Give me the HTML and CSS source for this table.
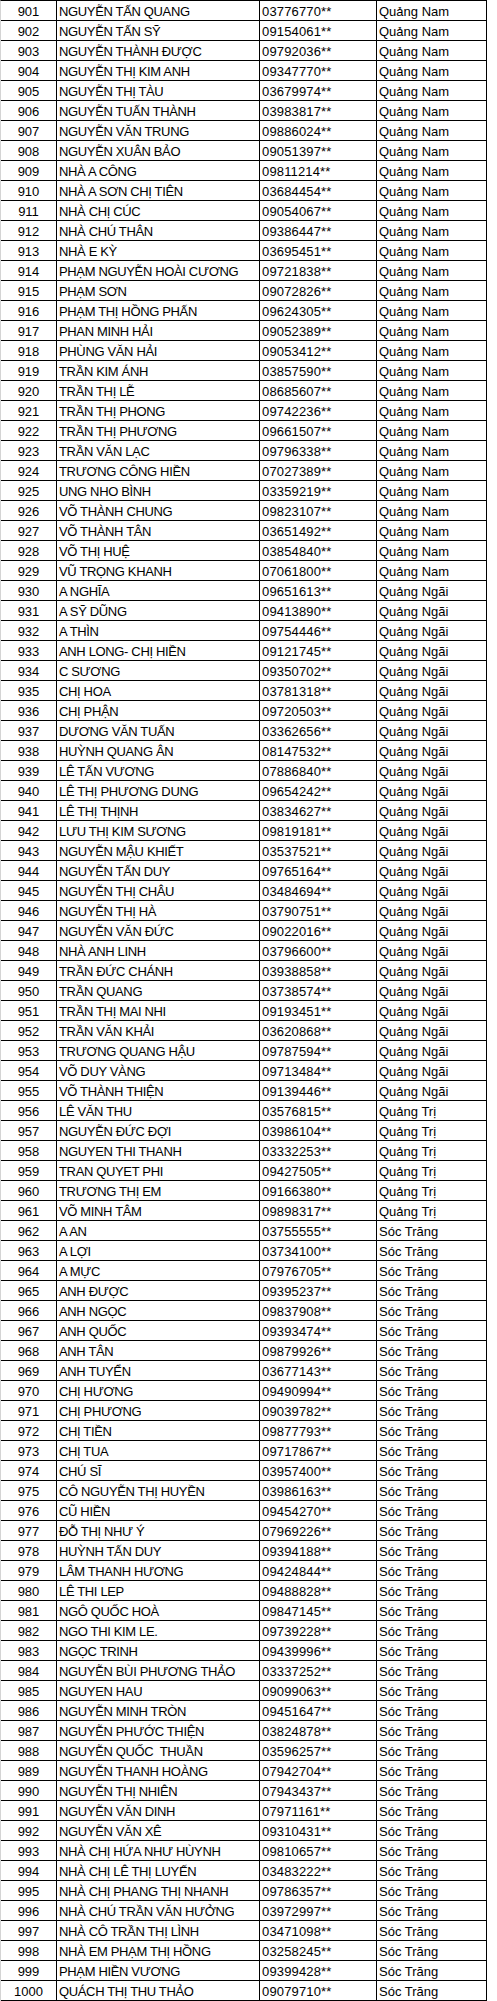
FILE: index.html
```html
<!DOCTYPE html>
<html lang="vi">
<head>
<meta charset="utf-8">
<title>Danh sách</title>
<link rel="stylesheet" href="styles.css">
</head>
<body>
<div class="sheet">
<div class="row"><div class="c num">901</div><div class="c name">NGUYỄN TẤN QUANG</div><div class="c phone">03776770**</div><div class="c prov">Quảng Nam</div></div>
<div class="row"><div class="c num">902</div><div class="c name">NGUYỄN TẤN SỸ</div><div class="c phone">09154061**</div><div class="c prov">Quảng Nam</div></div>
<div class="row"><div class="c num">903</div><div class="c name">NGUYỄN THÀNH ĐƯỢC</div><div class="c phone">09792036**</div><div class="c prov">Quảng Nam</div></div>
<div class="row"><div class="c num">904</div><div class="c name">NGUYỄN THỊ KIM ANH</div><div class="c phone">09347770**</div><div class="c prov">Quảng Nam</div></div>
<div class="row"><div class="c num">905</div><div class="c name">NGUYỄN THỊ TÀU</div><div class="c phone">03679974**</div><div class="c prov">Quảng Nam</div></div>
<div class="row"><div class="c num">906</div><div class="c name">NGUYỄN TUẤN THÀNH</div><div class="c phone">03983817**</div><div class="c prov">Quảng Nam</div></div>
<div class="row"><div class="c num">907</div><div class="c name">NGUYỄN VĂN TRUNG</div><div class="c phone">09886024**</div><div class="c prov">Quảng Nam</div></div>
<div class="row"><div class="c num">908</div><div class="c name">NGUYỄN XUÂN BẢO</div><div class="c phone">09051397**</div><div class="c prov">Quảng Nam</div></div>
<div class="row"><div class="c num">909</div><div class="c name">NHÀ A CÔNG</div><div class="c phone">09811214**</div><div class="c prov">Quảng Nam</div></div>
<div class="row"><div class="c num">910</div><div class="c name">NHÀ A SƠN CHỊ TIÊN</div><div class="c phone">03684454**</div><div class="c prov">Quảng Nam</div></div>
<div class="row"><div class="c num">911</div><div class="c name">NHÀ CHỊ CÚC</div><div class="c phone">09054067**</div><div class="c prov">Quảng Nam</div></div>
<div class="row"><div class="c num">912</div><div class="c name">NHÀ CHÚ THÂN</div><div class="c phone">09386447**</div><div class="c prov">Quảng Nam</div></div>
<div class="row"><div class="c num">913</div><div class="c name">NHÀ E KỲ</div><div class="c phone">03695451**</div><div class="c prov">Quảng Nam</div></div>
<div class="row"><div class="c num">914</div><div class="c name">PHẠM NGUYỄN HOÀI CƯƠNG</div><div class="c phone">09721838**</div><div class="c prov">Quảng Nam</div></div>
<div class="row"><div class="c num">915</div><div class="c name">PHẠM SƠN</div><div class="c phone">09072826**</div><div class="c prov">Quảng Nam</div></div>
<div class="row"><div class="c num">916</div><div class="c name">PHẠM THỊ HỒNG PHẤN</div><div class="c phone">09624305**</div><div class="c prov">Quảng Nam</div></div>
<div class="row"><div class="c num">917</div><div class="c name">PHAN MINH HẢI</div><div class="c phone">09052389**</div><div class="c prov">Quảng Nam</div></div>
<div class="row"><div class="c num">918</div><div class="c name">PHÙNG VĂN HẢI</div><div class="c phone">09053412**</div><div class="c prov">Quảng Nam</div></div>
<div class="row"><div class="c num">919</div><div class="c name">TRẦN KIM ÁNH</div><div class="c phone">03857590**</div><div class="c prov">Quảng Nam</div></div>
<div class="row"><div class="c num">920</div><div class="c name">TRẦN THỊ LỄ</div><div class="c phone">08685607**</div><div class="c prov">Quảng Nam</div></div>
<div class="row"><div class="c num">921</div><div class="c name">TRẦN THỊ PHONG</div><div class="c phone">09742236**</div><div class="c prov">Quảng Nam</div></div>
<div class="row"><div class="c num">922</div><div class="c name">TRẦN THỊ PHƯƠNG</div><div class="c phone">09661507**</div><div class="c prov">Quảng Nam</div></div>
<div class="row"><div class="c num">923</div><div class="c name">TRẦN VĂN LẠC</div><div class="c phone">09796338**</div><div class="c prov">Quảng Nam</div></div>
<div class="row"><div class="c num">924</div><div class="c name">TRƯƠNG CÔNG HIỀN</div><div class="c phone">07027389**</div><div class="c prov">Quảng Nam</div></div>
<div class="row"><div class="c num">925</div><div class="c name">UNG NHO BÌNH</div><div class="c phone">03359219**</div><div class="c prov">Quảng Nam</div></div>
<div class="row"><div class="c num">926</div><div class="c name">VÕ THÀNH CHUNG</div><div class="c phone">09823107**</div><div class="c prov">Quảng Nam</div></div>
<div class="row"><div class="c num">927</div><div class="c name">VÕ THÀNH TÂN</div><div class="c phone">03651492**</div><div class="c prov">Quảng Nam</div></div>
<div class="row"><div class="c num">928</div><div class="c name">VÕ THỊ HUỆ</div><div class="c phone">03854840**</div><div class="c prov">Quảng Nam</div></div>
<div class="row"><div class="c num">929</div><div class="c name">VŨ TRỌNG KHANH</div><div class="c phone">07061800**</div><div class="c prov">Quảng Nam</div></div>
<div class="row"><div class="c num">930</div><div class="c name">A NGHĨA</div><div class="c phone">09651613**</div><div class="c prov">Quảng Ngãi</div></div>
<div class="row"><div class="c num">931</div><div class="c name">A SỸ DŨNG</div><div class="c phone">09413890**</div><div class="c prov">Quảng Ngãi</div></div>
<div class="row"><div class="c num">932</div><div class="c name">A THÌN</div><div class="c phone">09754446**</div><div class="c prov">Quảng Ngãi</div></div>
<div class="row"><div class="c num">933</div><div class="c name">ANH LONG- CHỊ HIỀN</div><div class="c phone">09121745**</div><div class="c prov">Quảng Ngãi</div></div>
<div class="row"><div class="c num">934</div><div class="c name">C SƯƠNG</div><div class="c phone">09350702**</div><div class="c prov">Quảng Ngãi</div></div>
<div class="row"><div class="c num">935</div><div class="c name">CHỊ HOA</div><div class="c phone">03781318**</div><div class="c prov">Quảng Ngãi</div></div>
<div class="row"><div class="c num">936</div><div class="c name">CHỊ PHẬN</div><div class="c phone">09720503**</div><div class="c prov">Quảng Ngãi</div></div>
<div class="row"><div class="c num">937</div><div class="c name">DƯƠNG VĂN TUẤN</div><div class="c phone">03362656**</div><div class="c prov">Quảng Ngãi</div></div>
<div class="row"><div class="c num">938</div><div class="c name">HUỲNH QUANG ÂN</div><div class="c phone">08147532**</div><div class="c prov">Quảng Ngãi</div></div>
<div class="row"><div class="c num">939</div><div class="c name">LÊ TẤN VƯƠNG</div><div class="c phone">07886840**</div><div class="c prov">Quảng Ngãi</div></div>
<div class="row"><div class="c num">940</div><div class="c name">LÊ THỊ PHƯƠNG DUNG</div><div class="c phone">09654242**</div><div class="c prov">Quảng Ngãi</div></div>
<div class="row"><div class="c num">941</div><div class="c name">LÊ THỊ THỊNH</div><div class="c phone">03834627**</div><div class="c prov">Quảng Ngãi</div></div>
<div class="row"><div class="c num">942</div><div class="c name">LƯU THỊ KIM SƯƠNG</div><div class="c phone">09819181**</div><div class="c prov">Quảng Ngãi</div></div>
<div class="row"><div class="c num">943</div><div class="c name">NGUYỄN MẬU KHIẾT</div><div class="c phone">03537521**</div><div class="c prov">Quảng Ngãi</div></div>
<div class="row"><div class="c num">944</div><div class="c name">NGUYỄN TẤN DUY</div><div class="c phone">09765164**</div><div class="c prov">Quảng Ngãi</div></div>
<div class="row"><div class="c num">945</div><div class="c name">NGUYỄN THỊ CHÂU</div><div class="c phone">03484694**</div><div class="c prov">Quảng Ngãi</div></div>
<div class="row"><div class="c num">946</div><div class="c name">NGUYỄN THỊ HÀ</div><div class="c phone">03790751**</div><div class="c prov">Quảng Ngãi</div></div>
<div class="row"><div class="c num">947</div><div class="c name">NGUYỄN VĂN ĐỨC</div><div class="c phone">09022016**</div><div class="c prov">Quảng Ngãi</div></div>
<div class="row"><div class="c num">948</div><div class="c name">NHÀ ANH LINH</div><div class="c phone">03796600**</div><div class="c prov">Quảng Ngãi</div></div>
<div class="row"><div class="c num">949</div><div class="c name">TRẦN ĐỨC CHÁNH</div><div class="c phone">03938858**</div><div class="c prov">Quảng Ngãi</div></div>
<div class="row"><div class="c num">950</div><div class="c name">TRẦN QUANG</div><div class="c phone">03738574**</div><div class="c prov">Quảng Ngãi</div></div>
<div class="row"><div class="c num">951</div><div class="c name">TRẦN THỊ MAI NHI</div><div class="c phone">09193451**</div><div class="c prov">Quảng Ngãi</div></div>
<div class="row"><div class="c num">952</div><div class="c name">TRẦN VĂN KHẢI</div><div class="c phone">03620868**</div><div class="c prov">Quảng Ngãi</div></div>
<div class="row"><div class="c num">953</div><div class="c name">TRƯƠNG QUANG HẬU</div><div class="c phone">09787594**</div><div class="c prov">Quảng Ngãi</div></div>
<div class="row"><div class="c num">954</div><div class="c name">VÕ DUY VÀNG</div><div class="c phone">09713484**</div><div class="c prov">Quảng Ngãi</div></div>
<div class="row"><div class="c num">955</div><div class="c name">VÕ THÀNH THIỆN</div><div class="c phone">09139446**</div><div class="c prov">Quảng Ngãi</div></div>
<div class="row"><div class="c num">956</div><div class="c name">LÊ VĂN THU</div><div class="c phone">03576815**</div><div class="c prov">Quảng Trị</div></div>
<div class="row"><div class="c num">957</div><div class="c name">NGUYỄN ĐỨC ĐỢI</div><div class="c phone">03986104**</div><div class="c prov">Quảng Trị</div></div>
<div class="row"><div class="c num">958</div><div class="c name">NGUYEN THI THANH</div><div class="c phone">03332253**</div><div class="c prov">Quảng Trị</div></div>
<div class="row"><div class="c num">959</div><div class="c name">TRAN QUYET PHI</div><div class="c phone">09427505**</div><div class="c prov">Quảng Trị</div></div>
<div class="row"><div class="c num">960</div><div class="c name">TRƯƠNG THỊ EM</div><div class="c phone">09166380**</div><div class="c prov">Quảng Trị</div></div>
<div class="row"><div class="c num">961</div><div class="c name">VÕ MINH TÂM</div><div class="c phone">09898317**</div><div class="c prov">Quảng Trị</div></div>
<div class="row"><div class="c num">962</div><div class="c name">A AN</div><div class="c phone">03755555**</div><div class="c prov">Sóc Trăng</div></div>
<div class="row"><div class="c num">963</div><div class="c name">A LỢI</div><div class="c phone">03734100**</div><div class="c prov">Sóc Trăng</div></div>
<div class="row"><div class="c num">964</div><div class="c name">A MỰC</div><div class="c phone">07976705**</div><div class="c prov">Sóc Trăng</div></div>
<div class="row"><div class="c num">965</div><div class="c name">ANH ĐƯỢC</div><div class="c phone">09395237**</div><div class="c prov">Sóc Trăng</div></div>
<div class="row"><div class="c num">966</div><div class="c name">ANH NGỌC</div><div class="c phone">09837908**</div><div class="c prov">Sóc Trăng</div></div>
<div class="row"><div class="c num">967</div><div class="c name">ANH QUỐC</div><div class="c phone">09393474**</div><div class="c prov">Sóc Trăng</div></div>
<div class="row"><div class="c num">968</div><div class="c name">ANH TÂN</div><div class="c phone">09879926**</div><div class="c prov">Sóc Trăng</div></div>
<div class="row"><div class="c num">969</div><div class="c name">ANH TUYỂN</div><div class="c phone">03677143**</div><div class="c prov">Sóc Trăng</div></div>
<div class="row"><div class="c num">970</div><div class="c name">CHỊ HƯƠNG</div><div class="c phone">09490994**</div><div class="c prov">Sóc Trăng</div></div>
<div class="row"><div class="c num">971</div><div class="c name">CHỊ PHƯƠNG</div><div class="c phone">09039782**</div><div class="c prov">Sóc Trăng</div></div>
<div class="row"><div class="c num">972</div><div class="c name">CHỊ TIỀN</div><div class="c phone">09877793**</div><div class="c prov">Sóc Trăng</div></div>
<div class="row"><div class="c num">973</div><div class="c name">CHỊ TUA</div><div class="c phone">09717867**</div><div class="c prov">Sóc Trăng</div></div>
<div class="row"><div class="c num">974</div><div class="c name">CHÚ SĨ</div><div class="c phone">03957400**</div><div class="c prov">Sóc Trăng</div></div>
<div class="row"><div class="c num">975</div><div class="c name">CÔ NGUYỄN THỊ HUYỀN</div><div class="c phone">03986163**</div><div class="c prov">Sóc Trăng</div></div>
<div class="row"><div class="c num">976</div><div class="c name">CŨ HIỀN</div><div class="c phone">09454270**</div><div class="c prov">Sóc Trăng</div></div>
<div class="row"><div class="c num">977</div><div class="c name">ĐỖ THỊ NHƯ Ý</div><div class="c phone">07969226**</div><div class="c prov">Sóc Trăng</div></div>
<div class="row"><div class="c num">978</div><div class="c name">HUỲNH TẤN DUY</div><div class="c phone">09394188**</div><div class="c prov">Sóc Trăng</div></div>
<div class="row"><div class="c num">979</div><div class="c name">LÂM THANH HƯƠNG</div><div class="c phone">09424844**</div><div class="c prov">Sóc Trăng</div></div>
<div class="row"><div class="c num">980</div><div class="c name">LÊ THI LEP</div><div class="c phone">09488828**</div><div class="c prov">Sóc Trăng</div></div>
<div class="row"><div class="c num">981</div><div class="c name">NGÔ QUỐC HOÀ</div><div class="c phone">09847145**</div><div class="c prov">Sóc Trăng</div></div>
<div class="row"><div class="c num">982</div><div class="c name">NGO THI KIM LE.</div><div class="c phone">09739228**</div><div class="c prov">Sóc Trăng</div></div>
<div class="row"><div class="c num">983</div><div class="c name">NGỌC TRINH</div><div class="c phone">09439996**</div><div class="c prov">Sóc Trăng</div></div>
<div class="row"><div class="c num">984</div><div class="c name">NGUYỄN BÙI PHƯƠNG THẢO</div><div class="c phone">03337252**</div><div class="c prov">Sóc Trăng</div></div>
<div class="row"><div class="c num">985</div><div class="c name">NGUYEN HAU</div><div class="c phone">09099063**</div><div class="c prov">Sóc Trăng</div></div>
<div class="row"><div class="c num">986</div><div class="c name">NGUYỄN MINH TRÒN</div><div class="c phone">09451647**</div><div class="c prov">Sóc Trăng</div></div>
<div class="row"><div class="c num">987</div><div class="c name">NGUYỄN PHƯỚC THIỆN</div><div class="c phone">03824878**</div><div class="c prov">Sóc Trăng</div></div>
<div class="row"><div class="c num">988</div><div class="c name">NGUYỄN QUỐC  THUẦN</div><div class="c phone">03596257**</div><div class="c prov">Sóc Trăng</div></div>
<div class="row"><div class="c num">989</div><div class="c name">NGUYỄN THANH HOÀNG</div><div class="c phone">07942704**</div><div class="c prov">Sóc Trăng</div></div>
<div class="row"><div class="c num">990</div><div class="c name">NGUYỄN THỊ NHIÊN</div><div class="c phone">07943437**</div><div class="c prov">Sóc Trăng</div></div>
<div class="row"><div class="c num">991</div><div class="c name">NGUYỄN VĂN DINH</div><div class="c phone">07971161**</div><div class="c prov">Sóc Trăng</div></div>
<div class="row"><div class="c num">992</div><div class="c name">NGUYỄN VĂN XÊ</div><div class="c phone">09310431**</div><div class="c prov">Sóc Trăng</div></div>
<div class="row"><div class="c num">993</div><div class="c name">NHÀ CHỊ HỨA NHƯ HÙYNH</div><div class="c phone">09810657**</div><div class="c prov">Sóc Trăng</div></div>
<div class="row"><div class="c num">994</div><div class="c name">NHÀ CHỊ LÊ THỊ LUYẾN</div><div class="c phone">03483222**</div><div class="c prov">Sóc Trăng</div></div>
<div class="row"><div class="c num">995</div><div class="c name">NHÀ CHỊ PHANG THỊ NHANH</div><div class="c phone">09786357**</div><div class="c prov">Sóc Trăng</div></div>
<div class="row"><div class="c num">996</div><div class="c name">NHÀ CHÚ TRẦN VĂN HƯỞNG</div><div class="c phone">03972997**</div><div class="c prov">Sóc Trăng</div></div>
<div class="row"><div class="c num">997</div><div class="c name">NHÀ CÔ TRẦN THỊ LÌNH</div><div class="c phone">03471098**</div><div class="c prov">Sóc Trăng</div></div>
<div class="row"><div class="c num">998</div><div class="c name">NHÀ EM PHẠM THỊ HỒNG</div><div class="c phone">03258245**</div><div class="c prov">Sóc Trăng</div></div>
<div class="row"><div class="c num">999</div><div class="c name">PHẠM HIỀN VƯƠNG</div><div class="c phone">09399428**</div><div class="c prov">Sóc Trăng</div></div>
<div class="row"><div class="c num">1000</div><div class="c name">QUÁCH THỊ THU THẢO</div><div class="c phone">09079710**</div><div class="c prov">Sóc Trăng</div></div>
</div>
</body>
</html>
```
FILE: styles.css
```css
html, body {
  margin: 0;
  padding: 0;
  background: #ffffff;
}

.sheet {
  width: 487px;
  box-sizing: border-box;
  border-top: 1px solid #000000;
  border-left: 1px solid #d4d4d4;
  font-family: "Liberation Sans", Arial, sans-serif;
  font-size: 13px;
  color: #000000;
}

.row {
  display: grid;
  grid-template-columns: 56px 203px 117px 110px;
  height: 20px;
  box-sizing: border-box;
  border-bottom: 1px solid #000000;
}

.c {
  box-sizing: border-box;
  border-right: 1px solid #000000;
  height: 19px;
  line-height: 19px;
  padding-top: 1px;
  white-space: pre;
  overflow: hidden;
}

.num {
  text-align: center;
}

.name {
  padding-left: 2px;
  letter-spacing: -0.35px;
}

.phone {
  padding-left: 2px;
  letter-spacing: 0.15px;
}

.prov {
  padding-left: 2px;
}
```
